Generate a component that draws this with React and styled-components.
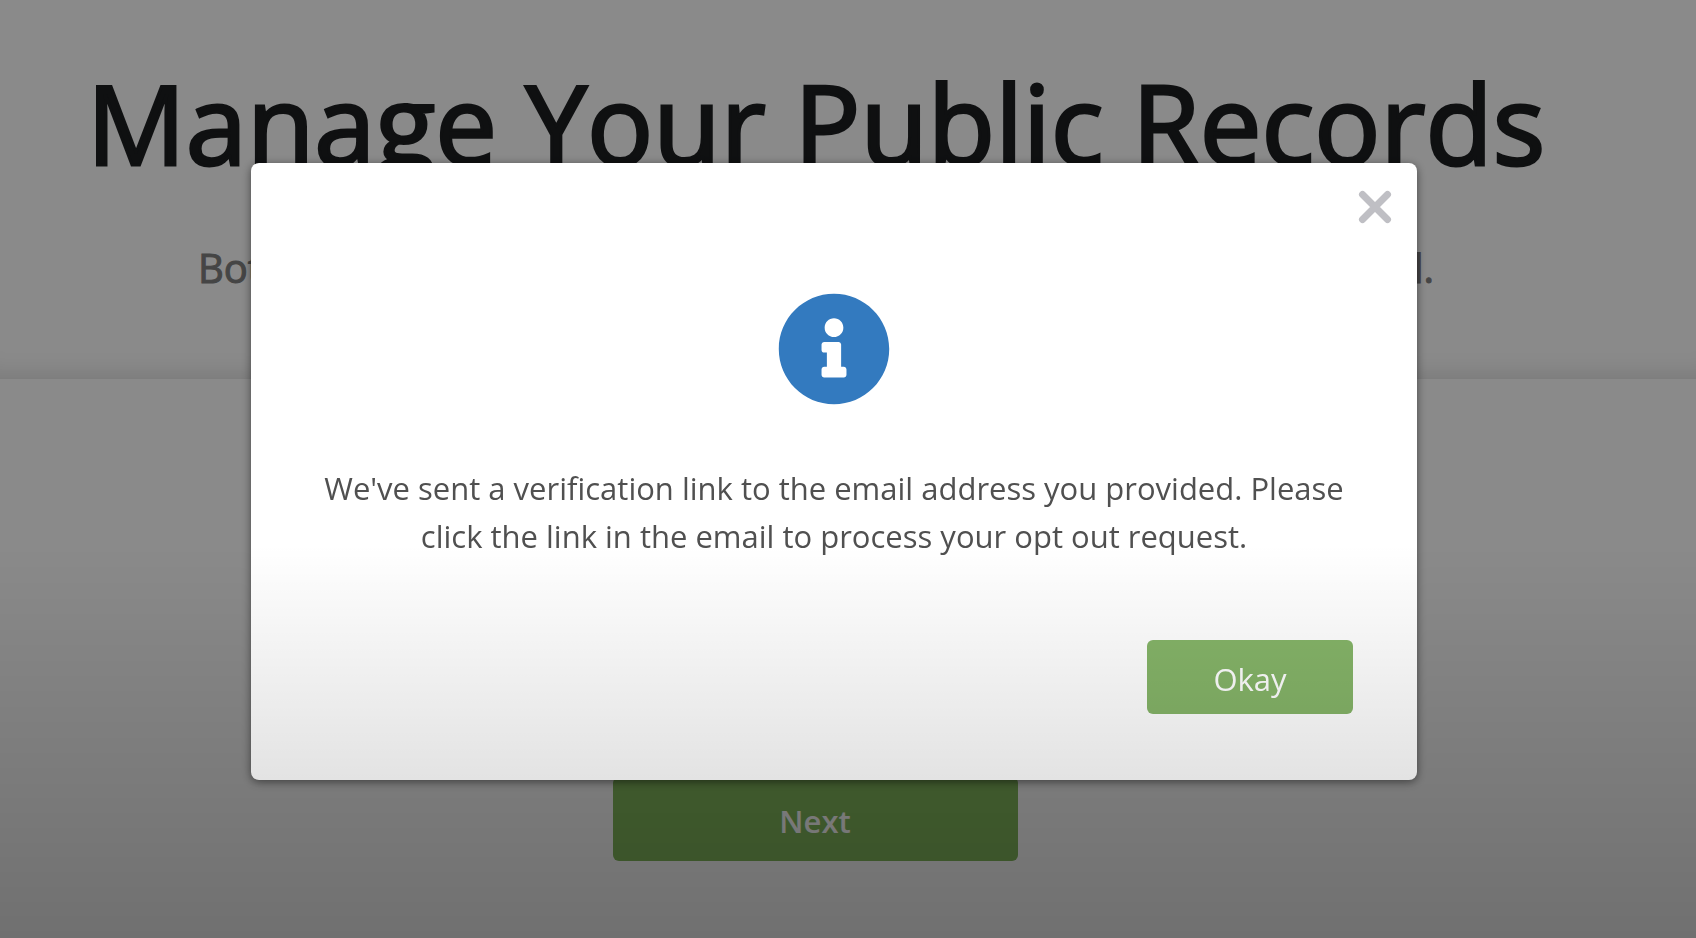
import React from "react";
import styled, { createGlobalStyle } from "styled-components";
import { FaInfoCircle } from "react-icons/fa";

const GlobalStyle = createGlobalStyle`
  * { box-sizing: border-box; }
  html, body, #root { height: 100%; }
  body {
    margin: 0;
    overflow: hidden;
    background: #fff;
    font-family: "Open Sans", "Noto Sans", sans-serif;
  }
  h1, p { margin: 0; }
  button { font-family: inherit; border: 0; cursor: pointer; }
`;

const Page = styled.main`
  min-height: 100%;
  display: flex;
  flex-direction: column;
`;

const Hero = styled.header`
  display: flex;
  flex-direction: column;
  align-items: center;
  gap: 48px;
  padding: 52px 64px 83px 0;
  box-shadow: inset 0 -28px 24px -24px rgba(0, 0, 0, 0.14);
`;

const Title = styled.h1`
  font-size: 110px;
  line-height: 140px;
  font-weight: 400;
  color: #1c1e20;
  -webkit-text-stroke: 3px #1c1e20;
  white-space: nowrap;
`;

const Subtitle = styled.p`
  font-size: 40px;
  line-height: 56px;
  color: #808080;
  -webkit-text-stroke: 1px #808080;
  white-space: nowrap;
`;

const FormSection = styled.section`
  flex: 1;
  display: flex;
  justify-content: center;
  align-items: flex-start;
  padding: 398px 66px 76px 0;
`;

const GreenButton = styled.button`
  width: ${(p) => (p.$wide ? "405px" : "206px")};
  height: ${(p) => (p.$wide ? "84px" : "74px")};
  padding: 4px 0 0;
  border-radius: 6px;
  background: ${(p) => (p.$wide ? "#83b95d" : "#85b468")};
  color: #fff;
  font-size: 31px;
  font-weight: ${(p) => (p.$wide ? 600 : 400)};
`;

const Backdrop = styled.div`
  position: fixed;
  inset: 0;
  display: flex;
  justify-content: center;
  align-items: flex-start;
  padding: 163px 28px 0 0;
  background: rgba(0, 0, 0, 0.46);
`;

const Dialog = styled.div`
  position: relative;
  width: 90%;
  max-width: 1166px;
  display: flex;
  flex-direction: column;
  align-items: center;
  padding: 129px 64px 66px;
  border-radius: 8px;
  background: #fff;
  box-shadow: 0 2px 10px rgba(0, 0, 0, 0.5);
`;

const CloseButton = styled.button`
  position: absolute;
  top: 24px;
  right: 22px;
  padding: 0;
  background: none;
  color: #bfbfc4;
  line-height: 0;
`;

const InfoIcon = styled(FaInfoCircle)`
  width: 114px;
  height: 114px;
  color: #337abf;
`;

const Message = styled.p`
  margin: 58px 0 80px;
  font-size: 31px;
  line-height: 48px;
  color: #505050;
  text-align: center;
`;

const Actions = styled.div`
  align-self: stretch;
  display: flex;
  justify-content: flex-end;
`;

const Shade = styled.div`
  position: fixed;
  inset: 0;
  pointer-events: none;
  background: linear-gradient(
    rgba(0, 0, 0, 0) 58%,
    rgba(0, 0, 0, 0.04) 67%,
    rgba(0, 0, 0, 0.11) 83%,
    rgba(0, 0, 0, 0.19) 100%
  );
`;

export default function App() {
  return (
    <>
      <GlobalStyle />
      <Page>
        <Hero>
          <Title>Manage Your Public Records</Title>
          <Subtitle>Both opt out requests and record updates are confirmed by email.</Subtitle>
        </Hero>
        <FormSection>
          <GreenButton type="button" $wide>Next</GreenButton>
        </FormSection>
      </Page>
      <Backdrop>
        <Dialog role="dialog" aria-modal="true" aria-describedby="dialog-message">
          <CloseButton type="button" aria-label="Close">
            <svg width="40" height="40" viewBox="0 0 40 40" fill="none" stroke="currentColor" strokeWidth="7" strokeLinecap="round">
              <path d="M7.5 7.5 32.5 32.5M32.5 7.5 7.5 32.5" />
            </svg>
          </CloseButton>
          <InfoIcon aria-hidden="true" />
          <Message id="dialog-message">
            We've sent a verification link to the email address you provided. Please
            click the link in the email to process your opt out request.
          </Message>
          <Actions>
            <GreenButton type="button">Okay</GreenButton>
          </Actions>
        </Dialog>
      </Backdrop>
      <Shade />
    </>
  );
}
